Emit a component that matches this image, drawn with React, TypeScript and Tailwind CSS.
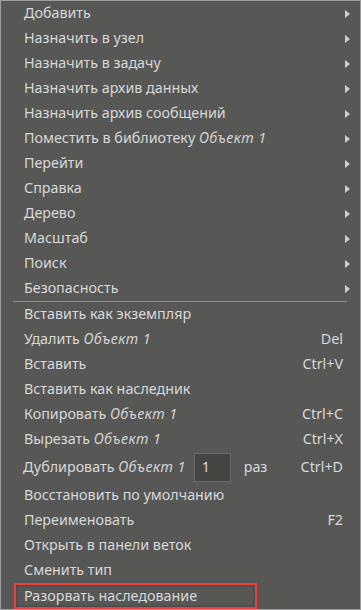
import { ReactNode } from "react";

type Item = {
  label: ReactNode;
  arrow?: boolean;
  shortcut?: string;
};

const obj = <i className="italic tracking-[0.4px] text-[#d2d2d2]">Объект 1</i>;

const top: Item[] = [
  { label: "Добавить", arrow: true },
  { label: "Назначить в узел", arrow: true },
  { label: "Назначить в задачу", arrow: true },
  { label: "Назначить архив данных", arrow: true },
  { label: "Назначить архив сообщений", arrow: true },
  { label: <>Поместить в библиотеку {obj}</>, arrow: true },
  { label: "Перейти", arrow: true },
  { label: "Справка", arrow: true },
  { label: "Дерево", arrow: true },
  { label: "Масштаб", arrow: true },
  { label: "Поиск", arrow: true },
  { label: "Безопасность", arrow: true },
];

const middle: Item[] = [
  { label: "Вставить как экземпляр" },
  { label: <>Удалить {obj}</>, shortcut: "Del" },
  { label: "Вставить", shortcut: "Ctrl+V" },
  { label: "Вставить как наследник" },
  { label: <>Копировать {obj}</>, shortcut: "Ctrl+C" },
  { label: <>Вырезать {obj}</>, shortcut: "Ctrl+X" },
];

const bottom: Item[] = [
  { label: "Восстановить по умолчанию" },
  { label: "Переименовать", shortcut: "F2" },
  { label: "Открыть в панели веток" },
  { label: "Сменить тип" },
];

function Arrow() {
  return (
    <svg width="5" height="8" viewBox="0 0 5 8" className="block">
      <path d="M0 0 L5 4 L0 8 Z" fill="#cfcfcf" />
    </svg>
  );
}

function Row({ item }: { item: Item }) {
  return (
    <div className="flex h-[25px] items-center pl-[23px] pr-[17px]">
      <span className="flex-1 whitespace-nowrap">{item.label}</span>
      {item.shortcut && <span className="whitespace-nowrap">{item.shortcut}</span>}
      {item.arrow && (
        <span className="-mr-[7px]">
          <Arrow />
        </span>
      )}
    </div>
  );
}

export default function App() {
  return (
    <div
      className="w-[361px] h-[610px] overflow-hidden border border-[#9c9c9c] bg-[#575756] text-[14.3px] leading-none text-[#d8d8d8]"
      style={{ fontFamily: '"Noto Sans", "Open Sans", sans-serif' }}
    >
      {top.map((it, i) => (
        <Row key={i} item={it} />
      ))}
      <div className="ml-[12px] mr-[13px] h-px bg-[#8e8e8e]" />
      {middle.map((it, i) => (
        <Row key={i} item={it} />
      ))}
      <div className="flex h-[31px] items-center pl-[22px] pr-[17px]">
        <span className="whitespace-nowrap">Дублировать {obj}</span>
        <div className="ml-[8px] flex h-[29px] w-[37px] items-center border border-[#6a6a68] bg-[#444443] pl-[7px]">
          1
        </div>
        <span className="ml-[13px]">раз</span>
        <span className="ml-auto">Ctrl+D</span>
      </div>
      {bottom.map((it, i) => (
        <Row key={i} item={it} />
      ))}
      <div className="ml-[13px] flex h-[26px] w-[243px] items-center border-2 border-[#ef3c3c] pl-[8px] shadow-[inset_0_0_3px_rgba(0,0,0,0.35)]">
        <span className="whitespace-nowrap">Разорвать наследование</span>
      </div>
    </div>
  );
}
